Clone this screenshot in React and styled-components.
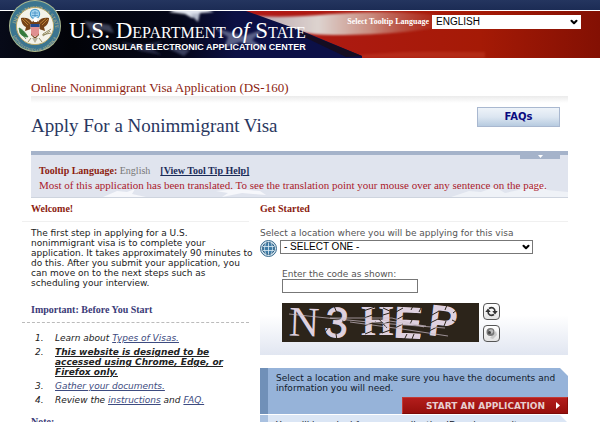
import React from 'react';
import styled, { createGlobalStyle, css } from 'styled-components';
import { ChevronDown } from 'lucide-react';

const GlobalStyle = createGlobalStyle`
  * {
    box-sizing: border-box;
  }
  html, body {
    height: 100%;
    margin: 0;
    overflow: hidden;
    background: #fff;
  }
  body {
    font: 9px/10px "DejaVu Sans", Verdana, sans-serif;
    color: #222;
  }
  a {
    color: #3d4b80;
  }
`;

const serif = css`
  font-family: "Liberation Serif", "Times New Roman", serif;
`;

const TopBar = styled.div`
  height: 11px;
  background: linear-gradient(#24355f, #1c2c55);
  border-bottom: 1px solid #fff;
`;
const Header = styled.header`
  position: relative;
  color: #fff;
`;
const Banner = styled.div`
  position: relative;
  display: flex;
  justify-content: space-between;
  height: 47px;
  padding: 0 19px 0 69px;
  background: #8e1406;
  overflow: hidden;
`;
const Flag = styled.svg`
  position: absolute;
  top: 0;
  left: 0;
  width: 100%;
  height: 100%;
`;
const SealIcon = styled.svg`
  position: absolute;
  top: 0;
  left: 9px;
  width: 52px;
  height: 52px;
`;
const Brand = styled.div`
  position: relative;
  padding-top: 9px;
`;
const SiteName = styled.div`
  ${serif}
  font-size: 23px;
  line-height: 22px;
  font-variant: small-caps;
  white-space: nowrap;
  em {
    font-variant: normal;
  }
`;
const SiteSection = styled.div`
  font: bold 9px/10px "Liberation Sans", Arial, sans-serif;
  text-align: right;
  white-space: nowrap;
`;
const LanguagePicker = styled.div`
  position: relative;
  display: flex;
  align-items: center;
  align-self: flex-start;
  gap: 3px;
  margin-top: 4px;
  label {
    ${serif}
    font-size: 8px;
    font-weight: bold;
  }
`;

const SelectWrap = styled.div`
  position: relative;
  width: ${props => props.$width};
  svg {
    position: absolute;
    top: 2px;
    right: 2px;
    color: #000;
    pointer-events: none;
  }
`;
const Select = styled.select`
  display: block;
  appearance: none;
  width: 100%;
  height: 14px;
  padding: 0 16px 0 3px;
  border: 1px solid ${props => props.$border};
  border-radius: 0;
  background: #fff;
  color: #000;
  font: 10px/12px "Liberation Sans", Arial, sans-serif;
`;

const Page = styled.main`
  padding: 22px 32px 0 22px;
`;
const Intro = styled.div`
  padding-left: 9px;
`;
const AppName = styled.div`
  ${serif}
  font-size: 13px;
  line-height: 16px;
  color: #8c1d10;
`;
const TitleRow = styled.div`
  display: flex;
  align-items: flex-start;
  justify-content: space-between;
  height: 55px;
  padding: 11px 8px 0 0;
  background: linear-gradient(#ebebeb, #fff 7px);
`;
const Title = styled.h1`
  ${serif}
  margin: 7px 0 0;
  font-size: 19px;
  line-height: 24px;
  font-weight: normal;
  color: #29375f;
`;
const FaqButton = styled.button`
  width: 83px;
  height: 20px;
  padding: 0;
  border: 1px solid #a9b8d0;
  background: linear-gradient(#eef3f9, #dce6f1 50%, #b7cbe0);
  color: #0a0a80;
  font: bold 10px/16px "DejaVu Sans", Verdana, sans-serif;
`;

const TooltipPanel = styled.section`
  ${serif}
  position: relative;
  height: 47px;
  padding: 9px 8px 0;
  border-top: 4px solid #a5b3ca;
  border-bottom: 1px solid #ced4de;
  background: #e0e4ee;
  p {
    position: relative;
    margin: 0;
    font-size: 11px;
    line-height: 15px;
    color: #ab1a2c;
    white-space: nowrap;
  }
`;
const TooltipLine = styled.div`
  position: relative;
  display: flex;
  gap: 10px;
  font-size: 10px;
  line-height: 14px;
  color: #777;
  b {
    color: #8c1d10;
  }
  a {
    color: #1b2c58;
    font-weight: bold;
  }
`;
const PanelTab = styled.button`
  position: absolute;
  top: -1px;
  right: 8px;
  width: 40px;
  height: 5px;
  padding: 0;
  border: 0;
  background: #a5b3ca;
  svg {
    display: block;
    margin: -2px auto 0;
  }
`;
const PanelArt = styled.svg`
  position: absolute;
  right: 0;
  bottom: 0;
  width: 100%;
  height: 16px;
`;

const Columns = styled.div`
  display: grid;
  grid-template-columns: 238px 1fr;
`;
const SectionTitle = styled.h2`
  ${serif}
  height: 24px;
  margin: 0 ${props => (props.$side ? '11px' : '0')} 0 0;
  padding: 5px 0 0 ${props => (props.$side ? '9px' : '0')};
  border-bottom: 1px ${props => props.$rule || 'solid #f0f0f0'};
  font-size: 10px;
  line-height: 12px;
  color: ${props => props.$color || '#8c1d10'};
`;
const Welcome = styled.p`
  margin: 0;
  padding: 6px 4px 11px 9px;
`;
const Steps = styled.ol`
  margin: 0;
  padding: 10px 18px 0 33px;
  font-style: italic;
  li {
    margin-bottom: 4px;
  }
  li::marker {
    content: counter(list-item) ".\\00a0\\00a0\\00a0\\00a0";
  }
`;
const NoteTitle = styled.h3`
  ${serif}
  margin: 10px 0 0;
  padding-left: 9px;
  font-size: 10px;
  line-height: 14px;
  color: #3b3b78;
`;

const StartForm = styled.form`
  height: 133px;
  margin-bottom: 13px;
  padding-top: 6px;
  color: #555;
  background: linear-gradient(#fff 70%, #e1e6f1);
`;
const LocationRow = styled.div`
  display: flex;
  gap: 3px;
  margin: 2px 0 12px;
`;
const Captcha = styled.div`
  padding-left: 22px;
  label {
    display: block;
  }
`;
const CodeInput = styled.input`
  display: block;
  width: 136px;
  height: 14px;
  margin-bottom: 10px;
  padding: 0 3px;
  border: 1px solid #777;
  background: #fff;
  font: 10px/12px "Liberation Sans", Arial, sans-serif;
`;
const CaptchaRow = styled.div`
  display: flex;
  gap: 4px;
`;
const CaptchaButtons = styled.div`
  display: flex;
  flex-direction: column;
  justify-content: space-between;
`;
const IconButton = styled.button`
  width: 17px;
  height: 17px;
  padding: 0;
  border: 1px solid #555;
  border-radius: 4px;
  background: linear-gradient(#fff, #e4e4e4);
  svg {
    display: block;
    margin: auto;
  }
`;

const ActionBox = styled.section`
  display: flex;
  flex-direction: column;
  align-items: flex-end;
  height: 46px;
  margin-bottom: 1px;
  padding-top: 5px;
  border-left: 8px solid ${props => props.$edge};
  background: ${props => props.$fill};
  clip-path: polygon(0 0, calc(100% - 8px) 0, 100% 8px, 100% 100%, 0 100%);
  color: #111a2c;
  p {
    align-self: stretch;
    margin: 0 0 4px;
    padding: 0 8px;
  }
`;
const ActionButton = styled.button`
  display: flex;
  align-items: center;
  justify-content: flex-end;
  gap: 11px;
  width: 166px;
  height: 17px;
  padding: 0 6px 0 0;
  border: 1px solid #c23a35;
  border-right-color: #8a0d0a;
  border-bottom-color: #7c0a08;
  background: linear-gradient(#b31d1c, #960f0c);
  color: #e8cfcf;
  font: bold 9px/12px "DejaVu Sans", Verdana, sans-serif;
`;

const Seal = () => (
  <SealIcon viewBox="0 0 52 52" role="img" aria-label="Department of State seal">
    <defs>
      <path id="ringTop" d="M5.500 30a20.500 20.500 0 1 1 41 0" />
      <path id="ringBottom" d="M2.500 28a23.500 23.500 0 0 0 47 0" />
    </defs>
    <circle cx="26" cy="26" r="26" fill="#a8b890" />
    <circle cx="26" cy="26" r="25" fill="#3b7590" />
    <g fill="#cdbf86" fontFamily="Liberation Serif" fontSize="5">
      <text><textPath href="#ringTop" startOffset="6">DEPARTMENT OF STATE</textPath></text>
      <text fontSize="4"><textPath href="#ringBottom" startOffset="8">UNITED STATES OF AMERICA</textPath></text>
    </g>
    <circle cx="26" cy="26" r="18.6" fill="#f4f3ea" stroke="#bba968" />
    <circle cx="26" cy="14" r="4.6" fill="#a4d4ef" stroke="#4a9ccc" strokeWidth="1.2" />
    <path d="M23 13h6M23 15.500h6M26 11v6" stroke="#3d88bd" strokeWidth=".7" />
    <path d="M23 22c-2-4-7-5-11-4 0 4 2 8 5 9l-1 4 6-2v6l4 4 4-4v-6l6 2-1-4c3-1 5-5 5-9-4-1-9 0-11 4l-2-3z" fill="#754217" />
    <path d="M13 19l6 6M15 18.500l6 5M39 19l-6 6M37 18.500l-6 5" stroke="#b98035" />
    <path d="M24 19l2-2 3 1-1 4h-3z" fill="#fff" />
    <path d="M21.500 24h9v7c0 3-2 5-4.500 6-2.500-1-4.500-3-4.500-6z" fill="#f8eeee" />
    <path d="M21.500 24h9v3h-9z" fill="#24498c" />
    <path d="M23 27v8M25 27v9M27 27v9M29 27v8" stroke="#c93232" />
    <path d="M10 28c3 1 6 4 9 9-4 0-7-2-8-4zM13 34l4 5" fill="#347a3c" stroke="#347a3c" strokeWidth=".8" />
    <path d="M34 34l8-5M34 36l7-5M33 35l9-2M22 38l-3 4M30 38l3 4" stroke="#8a8256" strokeWidth=".9" />
    <path d="M23 38l3 5 3-5z" fill="#b7b39c" />
  </SealIcon>
);

const FlagArt = () => (
  <Flag viewBox="0 0 600 47" preserveAspectRatio="none" aria-hidden="true">
    <defs>
      <linearGradient id="night" x1="0" x2="1">
        <stop offset="0" stopColor="#070a18" />
        <stop offset=".2" stopColor="#020308" />
        <stop offset=".5" stopColor="#05071a" />
        <stop offset=".65" stopColor="#0c1044" />
        <stop offset="1" stopColor="#0c1048" />
      </linearGradient>
      <linearGradient id="red" x1="0" x2="1">
        <stop offset="0" stopColor="#a80f1b" />
        <stop offset=".45" stopColor="#b01a16" />
        <stop offset=".8" stopColor="#a51a06" />
        <stop offset="1" stopColor="#831003" />
      </linearGradient>
      <linearGradient id="white" x1="0" x2="1">
        <stop offset="0" stopColor="#b9a6ae" />
        <stop offset=".3" stopColor="#ddd3cf" />
        <stop offset=".55" stopColor="#c98d80" />
        <stop offset="1" stopColor="#b02a1a" stopOpacity="0" />
      </linearGradient>
      <filter id="soft"><feGaussianBlur stdDeviation="1.2" /></filter>
    </defs>
    <rect width="600" height="47" fill="url(#red)" />
    <path d="M256 5c44 3 80-4 126-4 34 0 64 3 82 9-30 10-80 14-130 14-24 0-50-4-78-19z" fill="url(#white)" filter="url(#soft)" />
    <path d="M345 46c40-6 90-6 140-5v6H345z" fill="#c7442f" opacity=".4" filter="url(#soft)" />
    <path d="M0 0h246l56 20 60 25v2H0z" fill="url(#night)" />
    <g filter="url(#soft)">
      <path d="M169 1l16 2 7 4 8-5 14-1-8-3h-30z" fill="#e1e4ee" />
      <path d="M190 3l8 8 2-9z" fill="#b6bbcc" />
      <path d="M84 10l26 4 4 8-12-3-10 3z" fill="#3a4056" />
      <path d="M214 17l30 8 20-7-12 11 12 8-24-6-16 6 4-11z" fill="#8d96b4" opacity=".6" />
      <path d="M120 31l22 3 20-4-10 8 10 6-22-4z" fill="#252b44" />
      <path d="M165 36l25 3-6 6z" fill="#383e5c" />
    </g>
    <path d="M300 20l62 25-16 1-46-22z" fill="#150d21" />
  </Flag>
);

const Globe = () => (
  <svg width="17" height="17" viewBox="0 0 17 17" aria-hidden="true">
    <circle cx="8.500" cy="8.500" r="8" fill="#d4e5ee" stroke="#37688c" />
    <circle cx="8.500" cy="8.500" r="5.900" fill="#3f7ca5" stroke="#28577c" />
    <path d="M3 6.500h11M3 10.500h11M8.500 2.500v12M6 3c-2 4-2 7 0 11M11 3c2 4 2 7 0 11" fill="none" stroke="#e0eef5" strokeWidth=".8" />
  </svg>
);

const CaptchaImage = () => (
  <svg width="197" height="39" viewBox="0 0 197 39" role="img" aria-label="Captcha">
    <rect width="197" height="39" fill="#2c241a" />
    <g fill="#dfd1df" stroke="#dfd1df" fontFamily="Liberation Sans" fontSize="42">
      <text x="7" y="33" fontFamily="Liberation Serif" strokeWidth="0" transform="rotate(2 20 20)">N</text>
      <text x="43" y="34" strokeWidth="1" transform="rotate(6 55 20)">3</text>
      <text x="79" y="32" fontFamily="Liberation Serif" fontWeight="bold" strokeWidth="0">H</text>
      <text x="112" y="34" strokeWidth="2" transform="rotate(3 120 20)">E</text>
      <text x="147" y="32" strokeWidth="2" transform="rotate(7 155 20)">P</text>
    </g>
    <path
      d="M52 3l3 7M65 9l6-3M60 18l8 2M43 29l4-5M55 37l-1-6M68 26l5 3M81 8l12-4M82 15l11-4M81 23l13-4M83 31l12-5M92 2l5 9M101 5l11 5M101 12l13-4M101 21l13-4M100 30l14-5M114 9l7-4M114 17l7-4M113 25l8-4M122 37l3-6M129 7l2-4M137 9l2-4M128 21l2-4M137 22l2-4M138 37l2-5M130 36l2-5M150 12l7-4M148 20l8-4M147 28l8-4M163 7l2-5M171 10l5-4M170 17l6 3M162 23l2-5M96 15l9 10"
      fill="none"
      stroke="#2c241a"
    />
    <path d="M7 11l38 4 52 5 66 5M48 15l62 0 32 9M68 19l52 7 46 7M100 17l44 6" fill="none" stroke="#cdbfca" strokeWidth=".7" />
  </svg>
);

const RefreshIcon = () => (
  <svg width="13" height="13" viewBox="0 0 13 13" aria-hidden="true">
    <path d="M4 3.500C7 1.500 10 3 10 6.500M9 9.500C6 11.500 3 10 3 6.500" fill="none" stroke="#333" strokeWidth="1.600" />
    <path d="M7.300 6h5.400L10 9.500zM.3 7h5.400L3 3.500z" fill="#333" />
  </svg>
);

const SpeakerIcon = () => (
  <svg width="13" height="13" viewBox="0 0 13 13" aria-hidden="true">
    <path d="M5 11l6-7 1 4-4 4z" fill="#c8c8c8" />
    <circle cx="5.500" cy="5" r="4" fill="#777" />
    <circle cx="6" cy="4.500" r="2.200" fill="#bbb" />
    <circle cx="4.500" cy="5.500" r="1.500" fill="#444" />
  </svg>
);

const Arrow = ({ down }) => (
  <svg width="5" height="7" viewBox="0 0 5 7" aria-hidden="true">
    <path d={down ? 'M0 3h5L2.500 6z' : 'M0 0l4 3.500L0 7z'} fill="#fff" />
  </svg>
);

const Dropdown = ({ id, width, border, children }) => (
  <SelectWrap $width={width}>
    <Select id={id} $border={border}>{children}</Select>
    <ChevronDown size={10} strokeWidth={5} />
  </SelectWrap>
);

export default function App() {
  return (
    <>
      <GlobalStyle />
      <Header>
        <TopBar />
        <Banner>
          <FlagArt />
          <Brand>
            <SiteName>U.S. Department <em>of</em> State</SiteName>
            <SiteSection>CONSULAR ELECTRONIC APPLICATION CENTER</SiteSection>
          </Brand>
          <LanguagePicker>
            <label htmlFor="language">Select Tooltip Language</label>
            <Dropdown id="language" width="149px" border="#fff">
              <option>ENGLISH</option>
            </Dropdown>
          </LanguagePicker>
        </Banner>
        <Seal />
      </Header>
      <Page>
        <Intro>
          <AppName>Online Nonimmigrant Visa Application (DS-160)</AppName>
          <TitleRow>
            <Title>Apply For a Nonimmigrant Visa</Title>
            <FaqButton type="button">FAQs</FaqButton>
          </TitleRow>
          <TooltipPanel>
            <PanelArt viewBox="0 0 537 16" preserveAspectRatio="none" aria-hidden="true">
              <path d="M72 16l14-6 10 1 8-3-3 5 14 3zM185 10l22-2 22 2 6 4-24-2-20 4 6-4z" fill="#f6f7fb" />
              <path d="M420 16l18-6 12 1 14-5 10 6 18-4 16-8 8 9 21 2v5z" fill="#f3f5f9" opacity=".8" />
            </PanelArt>
            <PanelTab type="button" aria-label="Toggle panel"><Arrow down /></PanelTab>
            <TooltipLine>
              <span><b>Tooltip Language:</b> English</span>
              <a href="#help">[View Tool Tip Help]</a>
            </TooltipLine>
            <p>Most of this application has been translated. To see the translation point your mouse over any sentence on the page.</p>
          </TooltipPanel>
        </Intro>
        <Columns>
          <div>
            <SectionTitle $side>Welcome!</SectionTitle>
            <Welcome>
              The first step in applying for a U.S.<br />
              nonimmigrant visa is to complete your<br />
              application. It takes approximately 90 minutes to<br />
              do this. After you submit your application, you<br />
              can move on to the next steps such as<br />
              scheduling your interview.
            </Welcome>
            <SectionTitle $side $color="#3b3b78" $rule="dashed #bbb">Important: Before You Start</SectionTitle>
            <Steps>
              <li>Learn about <a href="#types">Types of Visas.</a></li>
              <li><b><u>This website is designed to be accessed using Chrome, Edge, or Firefox only.</u></b></li>
              <li><a href="#documents">Gather your documents.</a></li>
              <li>Review the <a href="#instructions">instructions</a> and <a href="#faq">FAQ.</a></li>
            </Steps>
            <NoteTitle>Note:</NoteTitle>
          </div>
          <div>
            <SectionTitle>Get Started</SectionTitle>
            <StartForm>
              <label htmlFor="location">Select a location where you will be applying for this visa</label>
              <LocationRow>
                <Globe />
                <Dropdown id="location" width="253px" border="#777">
                  <option>- SELECT ONE -</option>
                </Dropdown>
              </LocationRow>
              <Captcha>
                <label htmlFor="code">Enter the code as shown:</label>
                <CodeInput id="code" type="text" />
                <CaptchaRow>
                  <CaptchaImage />
                  <CaptchaButtons>
                    <IconButton type="button" aria-label="New code"><RefreshIcon /></IconButton>
                    <IconButton type="button" aria-label="Play code"><SpeakerIcon /></IconButton>
                  </CaptchaButtons>
                </CaptchaRow>
              </Captcha>
            </StartForm>
            <ActionBox $edge="#7090b8" $fill="#96b3d9">
              <p>Select a location and make sure you have the documents and information you will need.</p>
              <ActionButton type="button">START AN APPLICATION <Arrow /></ActionButton>
            </ActionBox>
            <ActionBox $edge="#a9c1e0" $fill="#dbe6f5">
              <p>You will be asked for your application ID and a security</p>
            </ActionBox>
          </div>
        </Columns>
      </Page>
    </>
  );
}
